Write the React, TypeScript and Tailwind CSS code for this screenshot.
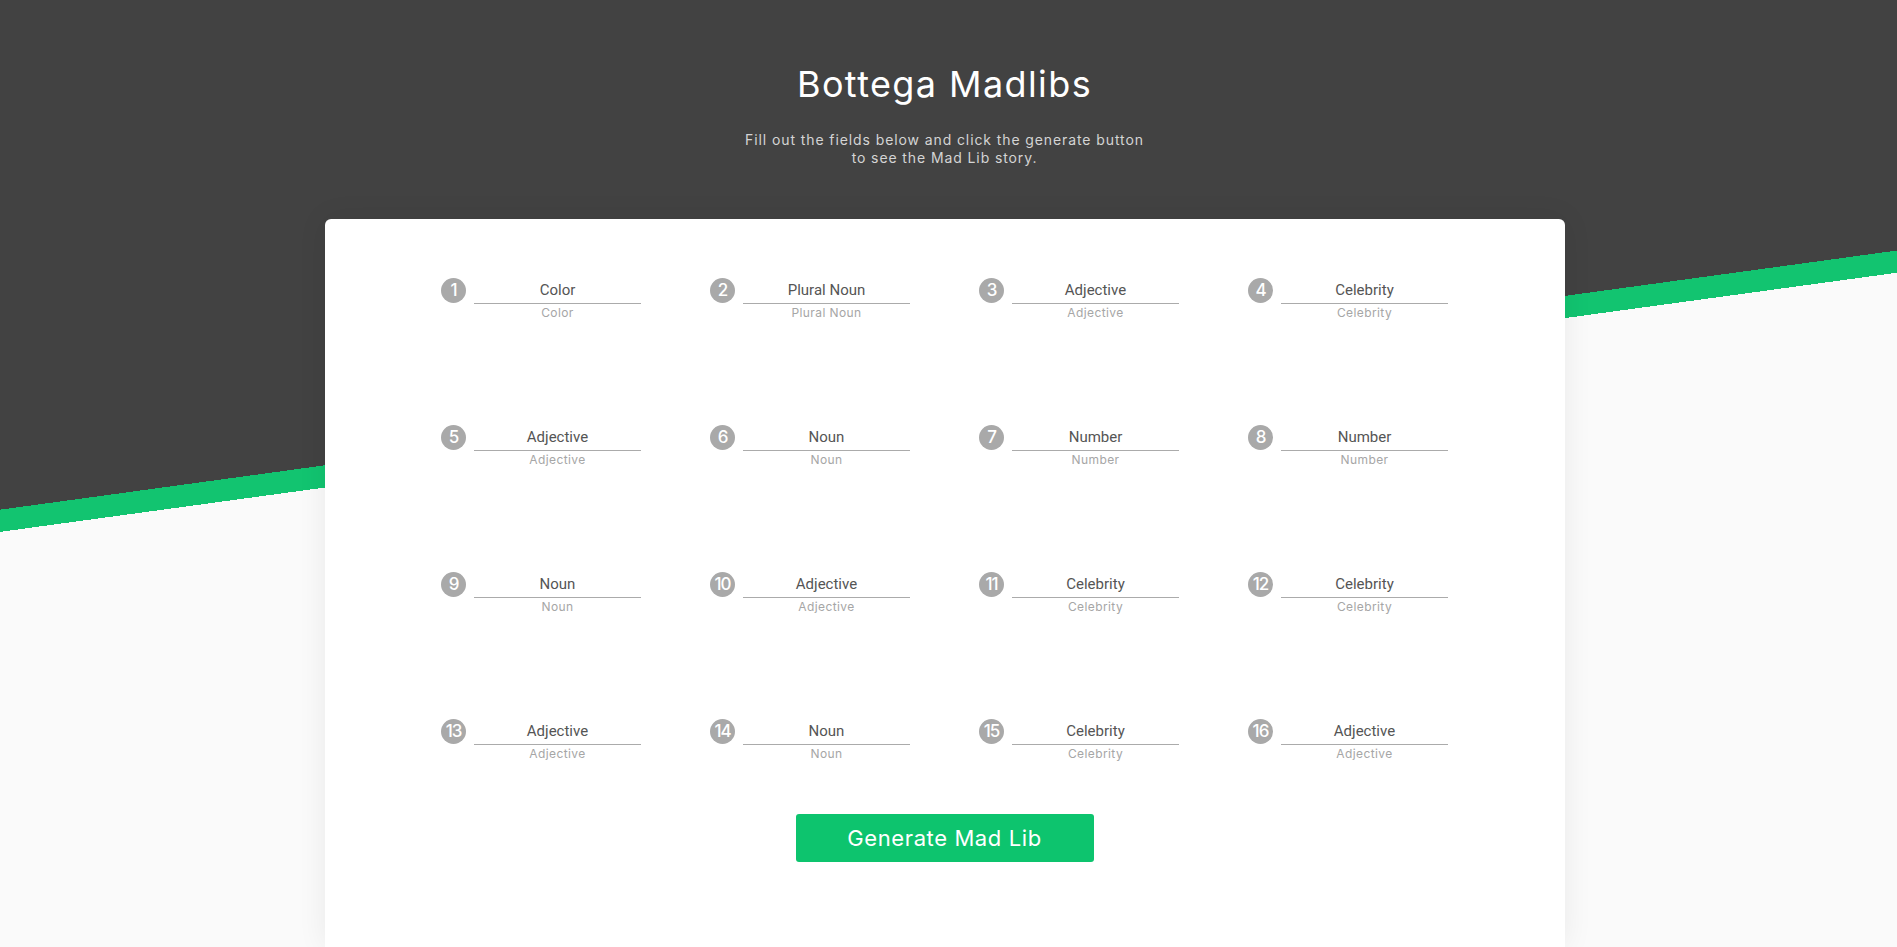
import { useState } from 'react'

const fields = [
  'Color',
  'Plural Noun',
  'Adjective',
  'Celebrity',
  'Adjective',
  'Noun',
  'Number',
  'Number',
  'Noun',
  'Adjective',
  'Celebrity',
  'Celebrity',
  'Adjective',
  'Noun',
  'Celebrity',
  'Adjective',
]

const heading = "font-['Inter','Liberation_Sans',sans-serif]"

function Field({ n, label }: { n: number; label: string }) {
  const [value, setValue] = useState('')
  return (
    <div className="flex h-[42px] items-start">
      <div
        className={`flex h-[25px] w-[25px] shrink-0 items-center justify-center rounded-full bg-[#a9a9a9] text-[17px] leading-none font-medium tracking-[-1px] text-white ${heading}`}
      >
        {n}
      </div>
      <div className="ml-[8px] flex w-[167px] flex-col">
        <input
          value={value}
          onChange={(e) => setValue(e.target.value)}
          placeholder={label}
          className="h-[26px] w-full border-b border-[#ababab] bg-transparent pb-[1px] text-center font-['Roboto',sans-serif] text-[15px] text-[#444] outline-none placeholder:text-[#555]"
        />
        <span className={`mt-[2px] text-center text-[12px] leading-[14px] tracking-[0.4px] text-[#a6a6a6] ${heading}`}>
          {label}
        </span>
      </div>
    </div>
  )
}

export default function App() {
  return (
    <div className="h-[947px] overflow-hidden bg-[linear-gradient(172.22deg,#424242_505px,#12c470_505px,#12c470_527px,#fafafa_527px)] pr-[8px]">
      <header className={`flex flex-col items-center text-center ${heading}`}>
        <h1 className="pt-[62px] text-[36px] leading-[44px] font-normal tracking-[1.4px] text-white">Bottega Madlibs</h1>
        <p className="mt-[25px] text-[14px] leading-[18px] tracking-[0.9px] text-[#d4d4d4]">
          Fill out the fields below and click the generate button
          <br />
          to see the Mad Lib story.
        </p>
      </header>

      <main className="mx-auto mt-[52px] flex h-[728px] w-[1240px] flex-col items-center rounded-t-md bg-white pt-[59px] shadow-[0_0_30px_rgba(0,0,0,0.07)]">
        <div className="grid grid-cols-[repeat(4,200px)] gap-x-[69px] gap-y-[105px]">
          {fields.map((label, i) => (
            <Field key={i} n={i + 1} label={label} />
          ))}
        </div>

        <button
          type="button"
          className={`mt-[53px] h-[48px] w-[298px] rounded-[3px] bg-[#0dc46e] text-[22px] tracking-[0.6px] text-white ${heading}`}
        >
          Generate Mad Lib
        </button>
      </main>
    </div>
  )
}
